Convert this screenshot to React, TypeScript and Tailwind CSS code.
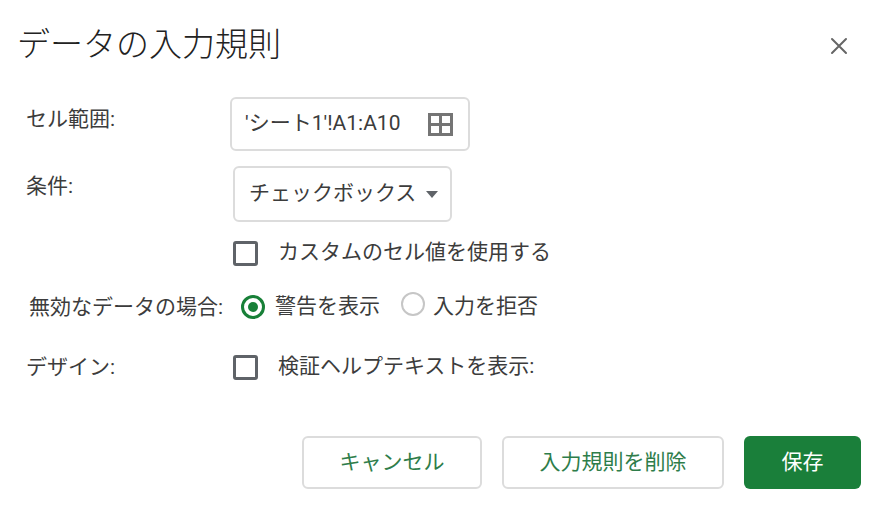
import React from "react";

const font = { fontFamily: "Roboto, 'Noto Sans CJK JP', sans-serif" };

const Checkbox: React.FC = () => (
  <span className="inline-block w-[25px] h-[25px] border-[3px] border-[#5f6368] rounded-[3px] bg-white" />
);

const Radio: React.FC<{ checked?: boolean }> = ({ checked }) =>
  checked ? (
    <span className="flex items-center justify-center w-[24px] h-[24px] rounded-full border-[3px] border-[#188038]">
      <span className="w-[10px] h-[10px] rounded-full bg-[#188038]" />
    </span>
  ) : (
    <span className="inline-block w-[24px] h-[24px] rounded-full border-2 border-[#c6c6c6]" />
  );

const FormRow: React.FC<{ label: string; className?: string; labelClass?: string; children: React.ReactNode }> = ({
  label,
  className,
  labelClass,
  children,
}) => (
  <div className={`flex pl-[26px] ${className ?? ""}`}>
    <div className={`w-[204px] shrink-0 text-[21px] leading-[28px] text-[#3c3c3c] ${labelClass ?? ""}`}>{label}</div>
    <div className="flex items-center">{children}</div>
  </div>
);

const App: React.FC = () => {
  return (
    <div className="w-[887px] h-[523px] bg-white flex flex-col" style={font}>
      <div className="h-[90px] flex items-center justify-between pl-[17px] pr-[38px]">
        <h1 className="text-[33px] leading-[40px] font-light text-[#222]">データの入力規則</h1>
        <svg width="20" height="20" viewBox="0 0 20 20" className="mt-[1px]">
          <path d="M3 3 L17 17 M17 3 L3 17" stroke="#666" strokeWidth="2" strokeLinecap="round" />
        </svg>
      </div>

      <FormRow label="セル範囲:" className="mt-[7px] items-start" labelClass="pt-[8px]">
        <div className="w-[240px] h-[54px] border-2 border-[#dcdcdc] rounded-[6px] flex items-center justify-between pl-[13px] pr-[15px]">
          <span className="text-[21px] text-[#3c3c3c]">'シート1'!A1:A10</span>
          <svg width="25" height="23" viewBox="0 0 25 23">
            <rect x="1.5" y="1.5" width="22" height="20" fill="none" stroke="#757575" strokeWidth="3" />
            <path d="M12.5 1.5 V21.5 M1.5 11.5 H23.5" stroke="#757575" strokeWidth="3" />
          </svg>
        </div>
      </FormRow>

      <FormRow label="条件:" className="mt-[15px] items-start" labelClass="pt-[6px]">
        <div className="ml-[3px] w-[219px] h-[56px] border-2 border-[#dcdcdc] rounded-[6px] flex items-center pl-[14px] pr-[12px] justify-between">
          <span className="text-[21px] text-[#3c3c3c]">チェックボックス</span>
          <svg width="12" height="7" viewBox="0 0 12 7">
            <path d="M0 0 H12 L6 7 Z" fill="#5f6368" />
          </svg>
        </div>
      </FormRow>

      <div className="mt-[18px] pl-[233px] flex items-center h-[26px]">
        <Checkbox />
        <span className="ml-[20px] text-[21px] text-[#3c3c3c]">カスタムのセル値を使用する</span>
      </div>

      <FormRow label="無効なデータの場合:" className="mt-[27px] items-center h-[28px] pl-[29px]" labelClass="w-[212px]">
        <Radio checked />
        <span className="ml-[10px] text-[21px] text-[#3c3c3c]">警告を表示</span>
        <span className="ml-[21px]">
          <Radio />
        </span>
        <span className="ml-[8px] text-[21px] text-[#3c3c3c]">入力を拒否</span>
      </FormRow>

      <FormRow label="デザイン:" className="mt-[32px] items-center h-[28px]" labelClass="w-[207px]">
        <Checkbox />
        <span className="ml-[20px] text-[21px] text-[#3c3c3c]">検証ヘルプテキストを表示:</span>
      </FormRow>

      <div className="mt-[55px] flex justify-end gap-[20px] pr-[26px]">
        <button className="w-[180px] h-[53px] border-2 border-[#dcdcdc] rounded-[6px] text-[21px] text-[#2e7d4a] bg-white">
          キャンセル
        </button>
        <button className="w-[222px] h-[53px] border-2 border-[#dcdcdc] rounded-[6px] text-[21px] text-[#2e7d4a] bg-white">
          入力規則を削除
        </button>
        <button className="w-[117px] h-[53px] rounded-[6px] text-[21px] text-white bg-[#1a7f3a]">保存</button>
      </div>
    </div>
  );
};

export default App;
